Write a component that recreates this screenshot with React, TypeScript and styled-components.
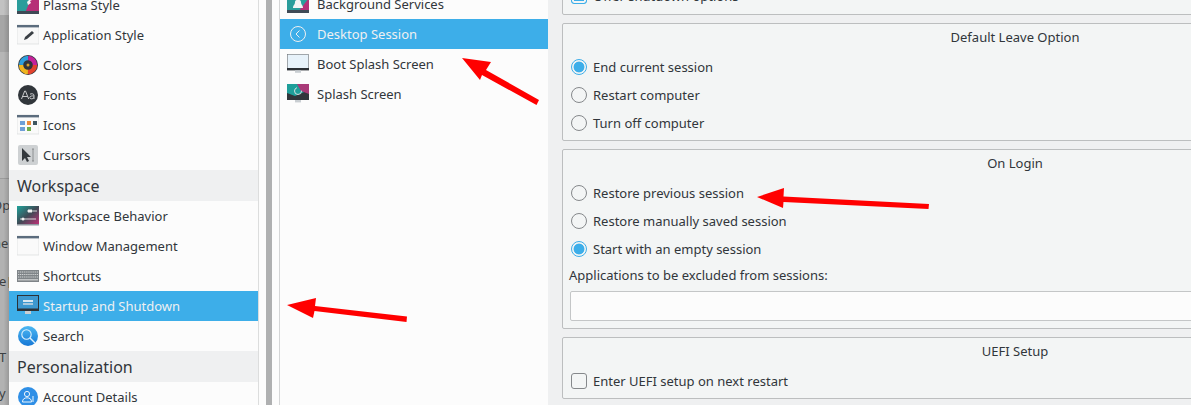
import React from "react";
import styled, { createGlobalStyle } from "styled-components";

const Global = createGlobalStyle`
  html, body { margin: 0; padding: 0; background: #eff0f1; }
  body { font-family: "Noto Sans", "Open Sans", sans-serif; font-size: 13px; color: #31363b; }
  #root { width: 1191px; height: 405px; overflow: hidden; }
`;

const Stage = styled.div`
  position: relative;
  display: flex;
  width: 1191px;
  height: 405px;
  overflow: hidden;
  background: #eff0f1;
`;

const Strip = styled.div`
  width: 9px;
  flex: none;
  overflow: hidden;
  padding-top: 195px;
  box-sizing: border-box;
  color: #3c3f42;
  font-size: 13px;
  background:
    linear-gradient(to right, rgba(0, 0, 0, 0) 40%, rgba(0, 0, 0, 0.14)),
    linear-gradient(
      to bottom,
      #c2c2c2 0 15px,
      #a6a6a6 15px 52px,
      #b6b6b6 52px 178px,
      #9c9c9c 178px 179px,
      #b2b2b2 179px
    );
`;

const StripLine = styled.div<{ $h: number; $indent: number }>`
  height: ${(p) => p.$h}px;
  line-height: 20px;
  white-space: nowrap;
  word-spacing: -2px;
  text-indent: ${(p) => p.$indent}px;
`;

const Sidebar = styled.div`
  width: 249px;
  flex: none;
  margin-top: -10px;
  background: #fcfcfc;
`;

const Gutter = styled.div`
  width: 22px;
  flex: none;
  display: flex;
  background: #fcfcfc;
  border-left: 1px solid #dcdddd;
  border-right: 1px solid #d4d5d6;
  box-sizing: border-box;
  padding-left: 7px;
`;

const ScrollBar = styled.div`
  width: 6px;
  background: #afb0b1;
`;

const List = styled.div`
  width: 268px;
  flex: none;
  margin-top: -11px;
  background: #fcfcfc;
`;

const Row = styled.div<{ $active?: boolean; $gap: number; $pad: number }>`
  display: flex;
  align-items: center;
  height: 30px;
  gap: ${(p) => p.$gap}px;
  padding-left: ${(p) => p.$pad}px;
  white-space: nowrap;
  background: ${(p) => (p.$active ? "#3daee9" : "transparent")};
  color: ${(p) => (p.$active ? "#eff0f1" : "#31363b")};
`;

const Header = styled.div`
  height: 31px;
  line-height: 33px;
  padding-left: 8px;
  font-size: 16px;
  color: #31363b;
  background: #eff0f1;
  overflow: hidden;
`;

const Pane = styled.div`
  flex: none;
  width: 920px;
  margin-top: -31px;
  margin-left: 14px;
  display: flex;
  flex-direction: column;
  gap: 8px;
`;

const Group = styled.section<{ $h: number }>`
  box-sizing: border-box;
  width: 906px;
  height: ${(p) => p.$h}px;
  border: 1px solid #bcbebf;
  border-radius: 2px;
  background: #f3f5f5;
  padding: 0 6px;
`;

const Title = styled.div`
  height: 26px;
  line-height: 26px;
  text-align: center;
`;

const Options = styled.div`
  padding-top: 3px;
`;

const Option = styled.div`
  display: flex;
  align-items: center;
  height: 28px;
  gap: 6px;
  padding-left: 2px;
  white-space: nowrap;
`;

const TopOption = styled(Option)`
  margin-top: 12px;
`;

const Radio = styled.span<{ $on?: boolean }>`
  box-sizing: border-box;
  width: 16px;
  height: 16px;
  flex: none;
  border-radius: 50%;
  border: 1px solid ${(p) => (p.$on ? "#3daee9" : "#85888b")};
  background: ${(p) => (p.$on ? "radial-gradient(circle, #3daee9 0 5px, #f3f5f5 5.8px)" : "#f3f5f5")};
`;

const Check = styled.span<{ $on?: boolean }>`
  box-sizing: border-box;
  width: 16px;
  height: 16px;
  flex: none;
  border-radius: 3px;
  border: 1px solid ${(p) => (p.$on ? "#3daee9" : "#85888b")};
  background: ${(p) => (p.$on ? "#3daee9" : "#f3f5f5")};
  box-shadow: ${(p) => (p.$on ? "inset 0 0 0 2px #f3f5f5" : "none")};
`;

const FieldLabel = styled.div`
  height: 18px;
  line-height: 18px;
  margin-top: 3px;
  white-space: nowrap;
`;

const TextField = styled.div`
  box-sizing: border-box;
  height: 30px;
  margin-top: 7px;
  margin-left: 1px;
  border: 1px solid #c4c6c7;
  border-radius: 2px;
  background: #fcfcfc;
`;

const Arrow = styled.svg`
  position: absolute;
  left: 0;
  top: 0;
  pointer-events: none;
`;

type Kind =
  | "plasma" | "app" | "colors" | "fonts" | "icons" | "cursors" | "behavior" | "window"
  | "keys" | "startup" | "search" | "account" | "services" | "back" | "boot" | "splash";

const Art = styled.svg`
  width: 22px;
  height: 22px;
  flex: none;
  display: block;
`;

const Duo = () => (
  <>
    <linearGradient id="duo" x1="0" y1="0" x2="1" y2="1">
      <stop offset="0" stopColor="#1fa39b" />
      <stop offset="0.5" stopColor="#3f4a55" />
      <stop offset="1" stopColor="#c42f78" />
    </linearGradient>
    <rect x="0" y="1" width="22" height="19" fill="url(#duo)" />
  </>
);

const Icon = ({ kind }: { kind: Kind }) => (
  <Art viewBox="0 0 22 22">
    {kind === "plasma" && (
      <>
        <rect y="0" width="22" height="19" fill="#2a9d9b" />
        <path d="M8 19 L16 0 H22 V19Z" fill="#b62f77" />
        <path d="M10 8l4-4 1 2-2 1 1 2-3 2z" fill="#f4f4f4" />
        <rect y="17" width="22" height="3" fill="#3e4a56" />
      </>
    )}
    {kind === "app" && (
      <>
        <rect y="1" width="22" height="19" fill="#f8f8f8" stroke="#d4d6d7" strokeWidth=".6" />
        <rect y="1" width="22" height="2.4" fill="#5b6c7d" />
        <path d="M7 16l1-3 7-6 2 2-7 6z" fill="#3a3f44" />
      </>
    )}
    {kind === "colors" && (
      <>
        <circle cx="11" cy="11" r="10" fill="#31363b" />
        <circle cx="11" cy="11" r="7" fill="none" stroke="#e3432d" strokeWidth="4.4" strokeDasharray="11 33" />
        <circle cx="11" cy="11" r="7" fill="none" stroke="#f0b51f" strokeWidth="4.4" strokeDasharray="11 33" strokeDashoffset="-11" />
        <circle cx="11" cy="11" r="7" fill="none" stroke="#2e9fdd" strokeWidth="4.4" strokeDasharray="11 33" strokeDashoffset="-22" />
        <circle cx="11" cy="11" r="7" fill="none" stroke="#c5229a" strokeWidth="4.4" strokeDasharray="11 33" strokeDashoffset="-33" />
        <circle cx="11" cy="11" r="4" fill="#31363b" />
        <circle cx="11" cy="11" r="1.5" fill="#d9a02c" />
      </>
    )}
    {kind === "fonts" && (
      <>
        <circle cx="11" cy="11" r="10" fill="#31363b" />
        <path d="M4.5 15L7.7 7h.8l3.2 8M5.7 12.5h4.8" fill="none" stroke="#d8d9da" strokeWidth=".9" />
        <path d="M13 10.2c1-.7 4-.8 4 1.2V15M17 12c-2-.3-4.2 0-4.2 1.6s3 1.6 4.2 0" fill="none" stroke="#d8d9da" strokeWidth=".9" />
      </>
    )}
    {kind === "icons" && (
      <>
        <rect y="1" width="22" height="19" fill="#fafafa" stroke="#d4d6d7" strokeWidth=".6" />
        <rect y="1" width="22" height="2.4" fill="#5b6c7d" />
        <rect x="3" y="7" width="5" height="4" fill="#6f9fd8" />
        <rect x="10" y="7" width="4" height="4" fill="#ee8a3c" />
        <rect x="16" y="7" width="4" height="4" fill="#3f5560" />
        <rect x="3" y="13" width="5" height="4" fill="#6f9fd8" />
        <rect x="10" y="13" width="4" height="4" fill="#6fae4b" />
      </>
    )}
    {kind === "cursors" && (
      <>
        <rect x="1" y="1" width="20" height="20" rx="2" fill="#ced1d3" />
        <path d="M5 4v13l3-3 2 4 2-1-2-4h4z" fill="#33383d" />
        <path d="M16 5v12M15 5h2M15 17h2" stroke="#7e8184" strokeWidth=".8" fill="none" />
      </>
    )}
    {kind === "behavior" && (
      <>
        <Duo />
        <rect y="19" width="22" height="1.5" fill="#8f98a0" />
        <path d="M3 14h16M10 6h10" stroke="#e8e8e8" strokeWidth=".9" />
        <rect x="11" y="4.5" width="4" height="3" fill="#f2f2f2" />
        <circle cx="6" cy="14" r="1.5" fill="#f2f2f2" />
      </>
    )}
    {kind === "window" && (
      <>
        <rect y="1" width="22" height="19" fill="#fafafa" stroke="#d4d6d7" strokeWidth=".6" />
        <rect y="1" width="22" height="2.4" fill="#5b6c7d" />
      </>
    )}
    {kind === "keys" && (
      <>
        <rect y="5" width="22" height="12" fill="#7f8488" />
        <path d="M1 7h20M1 9.5h20M1 12h20" stroke="#d2d4d5" strokeWidth="1.1" strokeDasharray="1.2 .7" />
        <path d="M1 14.8h20" stroke="#d2d4d5" strokeWidth="1.2" />
      </>
    )}
    {kind === "startup" && (
      <>
        <rect x="0" y="0" width="22" height="16" fill="#2b3238" />
        <rect x="1" y="1" width="20" height="12.5" fill="#3d98cf" />
        <rect x="6" y="5" width="10" height="2" fill="#d8e7f1" />
        <rect x="6" y="8" width="10" height="2" fill="#a9c9dd" />
        <rect x="8" y="16" width="6" height="3" fill="#c9ced2" />
      </>
    )}
    {kind === "search" && (
      <>
        <linearGradient id="sr" x1="0" y1="0" x2="0" y2="1">
          <stop offset="0" stopColor="#4cb8f2" />
          <stop offset="1" stopColor="#1678d6" />
        </linearGradient>
        <circle cx="11" cy="11" r="10" fill="url(#sr)" />
        <circle cx="9.5" cy="9.5" r="4.7" fill="none" stroke="#dff2fd" strokeWidth="1.1" />
        <path d="M13 13l5 5" stroke="#dff2fd" strokeWidth="1.4" />
      </>
    )}
    {kind === "account" && (
      <>
        <circle cx="11" cy="11" r="10" fill="#2f8fe6" />
        <circle cx="10" cy="8" r="2.6" fill="none" stroke="#eaf5fd" strokeWidth="1" />
        <path d="M5.5 16c0-3 2-4.2 4.5-4.2s4.5 1.2 4.5 4.2zM16 10v6" fill="none" stroke="#eaf5fd" strokeWidth="1" />
      </>
    )}
    {kind === "services" && (
      <>
        <rect y="0" width="22" height="19" fill="#2a9d9b" />
        <path d="M11 19L22 5v14z" fill="#b62f77" />
        <path d="M6 15c0-3 2-3 2-6s6-3 6 0 2 3 2 6zM10 5h2v2h-2z" fill="#f4f4f4" />
        <rect y="17" width="22" height="3" fill="#3e4a56" />
      </>
    )}
    {kind === "back" && (
      <>
        <circle cx="11" cy="11" r="7.5" fill="none" stroke="#eff0f1" strokeWidth="1" />
        <path d="M12.5 7.5L9 11l3.5 3.5" fill="none" stroke="#eff0f1" strokeWidth="1" />
      </>
    )}
    {kind === "boot" && (
      <>
        <rect x="0.3" y="1.3" width="21.4" height="15" fill="#e7f2fa" stroke="#6d7277" strokeWidth=".6" />
        <rect x="0" y="15" width="22" height="2.4" fill="#2b3035" />
        <rect x="8" y="17.4" width="6" height="2.4" fill="#c9ced2" />
      </>
    )}
    {kind === "splash" && (
      <>
        <rect x="0" y="1" width="22" height="16" fill="#31363b" />
        <path d="M0 1h22v6L8 13 0 10z" fill="#1f9f9a" />
        <path d="M10 1h12v10l-8-3z" fill="#a93a78" />
        <circle cx="11" cy="8" r="3.5" fill="none" stroke="#e8e8e8" strokeWidth=".9" strokeDasharray="15 6" />
        <rect x="8" y="17" width="6" height="2.4" fill="#c9ced2" />
      </>
    )}
  </Art>
);

const topItems: [Kind, string][] = [
  ["plasma", "Plasma Style"],
  ["app", "Application Style"],
  ["colors", "Colors"],
  ["fonts", "Fonts"],
  ["icons", "Icons"],
  ["cursors", "Cursors"],
];
const workItems: [Kind, string][] = [
  ["behavior", "Workspace Behavior"],
  ["window", "Window Management"],
  ["keys", "Shortcuts"],
  ["startup", "Startup and Shutdown"],
  ["search", "Search"],
];
const midItems: [Kind, string][] = [
  ["services", "Background Services"],
  ["back", "Desktop Session"],
  ["boot", "Boot Splash Screen"],
  ["splash", "Splash Screen"],
];

const SideRow = ({ kind, label, active }: { kind: Kind; label: string; active?: boolean }) => (
  <Row $gap={4} $pad={8} $active={active}>
    <Icon kind={kind} />
    {label}
  </Row>
);

const RedArrow = ({ d }: { d: string }) => <path d={d} fill="#ff0000" />;

export default function App() {
  return (
    <Stage>
      <Global />
      <Strip>
        <StripLine $h={38} $indent={-8}>Op</StripLine>
        <StripLine $h={38} $indent={-7}>ne</StripLine>
        <StripLine $h={76} $indent={-1}>e [</StripLine>
        <StripLine $h={36} $indent={-1}>T</StripLine>
        <StripLine $h={20} $indent={-1}>y</StripLine>
      </Strip>
      <Sidebar>
        {topItems.map(([k, l]) => (
          <SideRow key={l} kind={k} label={l} />
        ))}
        <Header>Workspace</Header>
        {workItems.map(([k, l]) => (
          <SideRow key={l} kind={k} label={l} active={k === "startup"} />
        ))}
        <Header>Personalization</Header>
        <SideRow kind="account" label="Account Details" />
      </Sidebar>
      <Gutter>
        <ScrollBar />
      </Gutter>
      <List>
        {midItems.map(([k, l]) => (
          <Row key={l} $gap={8} $pad={7} $active={k === "back"}>
            <Icon kind={k} />
            {l}
          </Row>
        ))}
      </List>
      <Pane>
        <Group $h={46}>
          <TopOption>
            <Check $on />
            Offer shutdown options
          </TopOption>
        </Group>
        <Group $h={118}>
          <Title>Default Leave Option</Title>
          <Options>
            <Option><Radio $on />End current session</Option>
            <Option><Radio />Restart computer</Option>
            <Option><Radio />Turn off computer</Option>
          </Options>
        </Group>
        <Group $h={180}>
          <Title>On Login</Title>
          <Options>
            <Option><Radio />Restore previous session</Option>
            <Option><Radio />Restore manually saved session</Option>
            <Option><Radio $on />Start with an empty session</Option>
          </Options>
          <FieldLabel>Applications to be excluded from sessions:</FieldLabel>
          <TextField />
        </Group>
        <Group $h={62}>
          <Title>UEFI Setup</Title>
          <Options>
            <Option><Check />Enter UEFI setup on next restart</Option>
          </Options>
        </Group>
      </Pane>
      <Arrow width="1191" height="405" viewBox="0 0 1191 405">
        <RedArrow d="M462 58 L491 62 L486 70 L539 100 L536.5 105 L482 75 L480 80 Z" />
        <RedArrow d="M757 197 L784 188 L783.5 196.5 L929 204 L928.5 209 L783.5 202 L783 208 Z" />
        <RedArrow d="M287 305 L316 298 L315 306 L407 316.5 L406.5 322 L314.5 311 L313 318 Z" />
      </Arrow>
    </Stage>
  );
}
